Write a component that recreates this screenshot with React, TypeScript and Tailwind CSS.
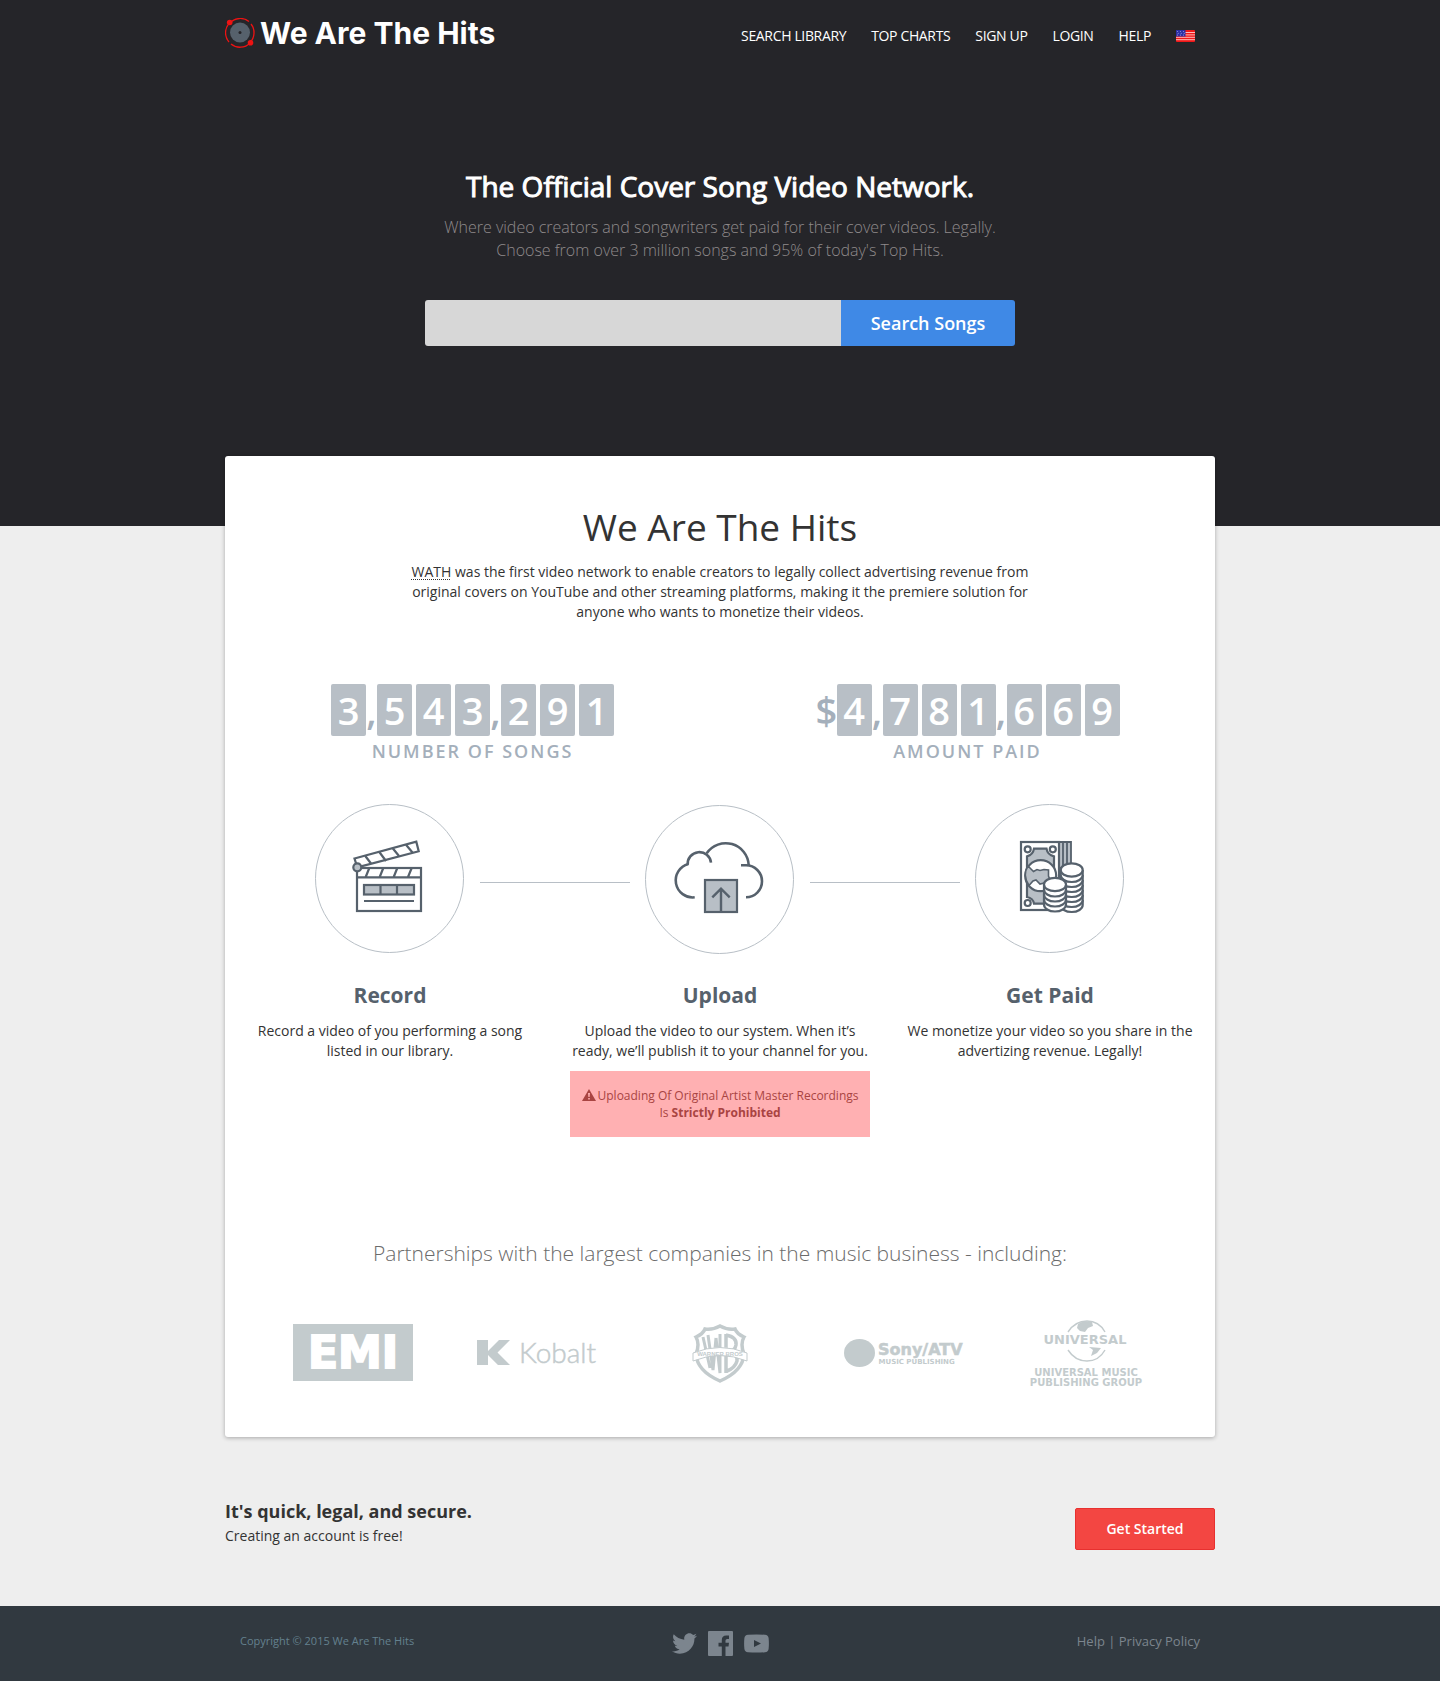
import React from "react";
import { FaTwitter } from "react-icons/fa";

const INK = "#56616c";
const TINT = "#b8bfc6";
const LOGO = "#c3cbcd";

function BrandMark() {
  return (
    <svg width="30" height="30" viewBox="0 0 30 30" aria-hidden="true">
      <circle cx="15" cy="14.500" r="10" fill="#56616c" />
      <circle cx="15" cy="14.500" r="1.500" fill="#252529" />
      <g fill="none" stroke="#ed1313" strokeWidth="1.300">
        <path d="M5 5A14 14 0 0 1 24 3.500" />
        <path d="M26 6A14 14 0 0 1 25 24.500" />
        <path d="M25 25A14 14 0 0 1 6 26" />
        <path d="M4 24A14 14 0 0 1 4.500 5" />
      </g>
      <circle cx="4.700" cy="4.500" r="2.800" fill="#ed1313" />
      <circle cx="25.500" cy="24.700" r="2.800" fill="#ed1313" />
    </svg>
  );
}

function Flag() {
  return (
    <svg width="19" height="12" viewBox="0 0 19 12" role="img" aria-label="United States">
      <rect width="19" height="12" rx="1" fill="#f01818" />
      <path d="M0 2.500H19M0 4.900H19M0 7.300H19M0 9.700H19" stroke="#fbb" strokeWidth="1" />
      <rect width="9.500" height="6.500" fill="#2b2fa5" />
      <g fill="#8f92dd">
        {[1.5, 4.5, 7.5].map((x) => (
          <g key={x}>
            <circle cx={x} cy="1.500" r="0.600" />
            <circle cx={x + 0.7} cy="3.300" r="0.600" />
            <circle cx={x} cy="5.100" r="0.600" />
          </g>
        ))}
      </g>
    </svg>
  );
}

function StepCircle({ label, cy, children }: { label: string; cy: number; children: React.ReactNode }) {
  return (
    <svg className="shrink-0" width="150" height="150" viewBox="0 0 150 150" role="img" aria-label={label}>
      <circle cx="74.500" cy={cy} r="74" fill="none" stroke={TINT} />
      <g fill="none" stroke={INK} strokeWidth="2.200">
        {children}
      </g>
    </svg>
  );
}

function Clapper() {
  return (
    <>
      <rect x="42" y="64" width="64" height="43" />
      <path d="M42 73.300H106M54.300 64L50.700 73M68.300 64L64.700 73M82.300 64L78.700 73M96.700 64L93 73" />
      <path d="M39.500 54.500L101.300 37.700L103.700 47.300L42.300 63.300Z" />
      <path d="M50.300 52L56 59.500M64.300 48L71 57M77.700 44.300L84 52M91 40.700L97.700 48.700" />
      <rect x="49" y="81" width="50" height="9.500" fill={TINT} />
      <path d="M65.500 81V90.500M82 81V90.500M49 97H99" />
      <circle cx="42.300" cy="63.300" r="4" fill={TINT} />
    </>
  );
}

function CloudUpload() {
  return (
    <>
      <g strokeWidth="2.600">
        <path d="M49.700 93.300A17 17 0 0 1 43.300 60" />
        <path d="M42.700 61A11.700 11.700 0 1 1 66 58.700" />
        <path d="M61.700 49.300A23 23 0 0 1 103.700 61.300" />
        <path d="M96 61.300H101A16 16 0 0 1 101 93.300" />
      </g>
      <rect x="60" y="76" width="32" height="32" fill={TINT} />
      <path d="M76 85V108M67.300 93.300L76 84.600L84.700 93.300" strokeWidth="2.400" />
    </>
  );
}

function CoinStack({ cx, top, coins, step }: { cx: number; top: number; coins: number; step: number }) {
  const rings = Array.from({ length: coins }, (_, i) => top + (coins - i) * step);
  return (
    <>
      {rings.map((y) => (
        <path key={y} d={`M${cx - 11} ${y - step}V${y}A11 7 0 0 0 ${cx + 11} ${y}V${y - step}`} fill="#fff" />
      ))}
      <ellipse cx={cx} cy={top} rx="11" ry="6.700" fill="#fff" />
    </>
  );
}

function Money() {
  return (
    <>
      <path d="M84 38H96V64H84ZM88 38V64M92 38V64" fill={TINT} strokeWidth="1.800" />
      <rect x="46" y="38" width="38" height="68" fill="#fff" />
      <path
        d="M59 44.700H71.500Q72.500 51 79 52.300V93Q72.500 94 71.500 99.700H59Q58 94 52 93V52.300Q58 51 59 44.700Z"
        fill={TINT}
      />
      <circle cx="52.700" cy="45.300" r="3" fill="#fff" />
      <circle cx="77.800" cy="45.300" r="3" fill="#fff" />
      <circle cx="52.700" cy="99" r="3" fill="#fff" />
      <circle cx="65.700" cy="71.700" r="15.500" fill="#fff" />
      <path
        d="M53 62L58.500 67.500L62 65.500L65 66.500L69 65.500L73.500 66V72L75 76L71 78.500L65 80L61 76L58 77L54 81.500Q47 71 53 62Z"
        fill={TINT}
        strokeWidth="1.600"
      />
      <CoinStack cx={96.700} top={66} coins={7} step={5} />
      <CoinStack cx={80} top={80.500} coins={4} step={5} />
    </>
  );
}

function EmiLogo() {
  return (
    <svg width="120" height="59" viewBox="0 0 120 59" role="img" aria-label="EMI">
      <rect width="120" height="57" fill={LOGO} />
      <text x="60" y="44" textAnchor="middle" fill="#fff" stroke="#fff" strokeWidth="2" className="font-['DejaVu_Sans'] text-[44px] font-bold">
        EMI
      </text>
    </svg>
  );
}

function KobaltLogo() {
  return (
    <svg className="overflow-visible" width="120" height="33" viewBox="0 0 120 33" role="img" aria-label="Kobalt">
      <path d="M0 3H11V14L22 3H33L20.500 15.500L33 28H21L11 18V28H0Z" fill={LOGO} />
      <text x="42" y="26" fill={LOGO} stroke={LOGO} strokeWidth="0.500" className="font-['Lato'] text-[28px] font-light">
        Kobalt
      </text>
    </svg>
  );
}

function WarnerLogo() {
  return (
    <svg width="120" height="60" viewBox="0 0 120 60" role="img" aria-label="Warner Bros.">
      <g fill="none" stroke={LOGO}>
        <path
          d="M60 2Q67 6 75 5Q77 10 84 13Q80 20 84 30Q83 47 60 57Q37 47 36 30Q40 20 36 13Q43 10 45 5Q53 6 60 2Z"
          strokeWidth="3.500"
        />
        <path d="M43 13L50 44M48 11L53 46L56 14M56 14L60 49V10" strokeWidth="3" />
        <path d="M66 10V49M66 11Q77 13 76 21Q75 27 68 28Q78 29 77 37Q75 44 67 47" strokeWidth="3.500" />
      </g>
      <path d="M33 29Q60 18 87 29V37Q60 26 33 37Z" fill="#fff" stroke={LOGO} />
      <text x="60" y="31.500" textAnchor="middle" fill={LOGO} className="font-['Liberation_Sans'] text-[6px] font-bold">
        WARNER BROS
      </text>
    </svg>
  );
}

function SonyLogo() {
  return (
    <svg width="120" height="31" viewBox="0 0 120 31" role="img" aria-label="Sony/ATV Music Publishing">
      <ellipse cx="15.500" cy="15" rx="15.500" ry="14" fill={LOGO} />
      <g fill={LOGO} className="font-['DejaVu_Sans'] font-bold">
        <text x="34" y="17" stroke={LOGO} strokeWidth="0.500" className="text-[16px]">
          Sony/ATV
        </text>
        <text x="34.500" y="25.500" className="text-[7px]">
          MUSIC PUBLISHING
        </text>
      </g>
    </svg>
  );
}

function UniversalLogo() {
  return (
    <svg width="120" height="67" viewBox="0 0 120 67" role="img" aria-label="Universal Music Publishing Group">
      <g fill="none" stroke={LOGO} strokeWidth="1.400">
        <path d="M41 12Q48 1 60 1Q72 1 78 12" />
        <path d="M41 30Q48 41 60 41Q72 41 78 30" />
      </g>
      <path d="M51 4Q56 0 65 2L66 6L61 8L58 12L53 11L50 8ZM62 27L74 28L70 33L64 36L66 30Z" fill={LOGO} />
      <g fill={LOGO} textAnchor="middle" className="font-['DejaVu_Sans'] font-bold">
        <text x="58" y="24" className="text-[13px]">
          UNIVERSAL
        </text>
        <text x="59" y="56" className="text-[10px]">
          UNIVERSAL MUSIC
        </text>
        <text x="59" y="66" className="text-[10px]">
          PUBLISHING GROUP
        </text>
      </g>
    </svg>
  );
}

function Counter({ value, prefix, label }: { value: string; prefix?: string; label: string }) {
  return (
    <div className="text-center text-[#a4afbb]">
      <div className="flex h-[52px] items-start justify-center text-[38px] leading-[52px] font-semibold">
        {prefix && <span className="w-[21px] text-left">{prefix}</span>}
        {value.split("").map((c, i) =>
          c === "," ? (
            <span key={i} className="-ml-1 w-[11px]">
              ,
            </span>
          ) : (
            <span key={i} className={`w-[35px] rounded-xs bg-[#b8bfc6] text-white ${i < value.length - 1 ? "mr-1" : ""}`}>
              {c}
            </span>
          )
        )}
      </div>
      <p className="mt-[3px] text-[18px] leading-[24px] font-semibold tracking-[2px] uppercase">{label}</p>
    </div>
  );
}

const nav = ["Search Library", "Top Charts", "Sign Up", "Login", "Help"];

function Connector() {
  return <div className="mt-1.5 h-px w-[150px] bg-[#b8bfc6]" />;
}

export default function App() {
  return (
    <div className="bg-[#eeeeee] font-['Open_Sans',sans-serif] text-[14px] leading-[20px] text-[#333333]">
      <div className="bg-[#252529] px-4 pb-[180px]">
        <header className="mx-auto flex max-w-[990px] items-start justify-between pt-[18px]">
          <a href="#" className="flex h-[30px] items-center gap-[5px] font-['Inter'] text-[30px] leading-[30px] font-bold text-white">
            <BrandMark />
            We Are The Hits
          </a>
          <nav className="mt-[8px] flex items-center gap-[25px] pr-5 text-white uppercase">
            {nav.map((n) => (
              <a key={n} href="#" className="tracking-tight">
                {n}
              </a>
            ))}
            <a href="#">
              <Flag />
            </a>
          </nav>
        </header>
        <section className="mx-auto max-w-[590px] pt-[118px] text-center">
          <h1 className="text-[28px] leading-[40px] text-white [-webkit-text-stroke:1px_white]">The Official Cover Song Video Network.</h1>
          <p className="mt-[10px] text-[16px] leading-[23px] font-light text-[#8f8a8b]">
            Where video creators and songwriters get paid for their cover videos. Legally.
            <br />
            Choose from over 3 million songs and 95% of today's Top Hits.
          </p>
          <form className="mt-[38px] flex h-[46px]" onSubmit={(e) => e.preventDefault()}>
            <input
              type="text"
              aria-label="Search songs"
              className="min-w-0 flex-1 rounded-l-[3px] bg-[#d7d7d7] px-4 text-[18px] outline-none"
            />
            <button type="submit" className="w-[174px] rounded-r-[3px] bg-[#3f89e6] text-[18px] font-semibold text-white">
              Search Songs
            </button>
          </form>
        </section>
      </div>

      <main className="mx-auto -mt-[70px] max-w-[990px] rounded-[3px] bg-white pt-[46px] pb-[50px] shadow-[0_1px_4px_rgba(0,0,0,0.3)]">
        <h2 className="text-center text-[37px] leading-[50px]">We Are The Hits</h2>
        <p className="mx-auto mt-[10px] max-w-[630px] text-center">
          <abbr title="We Are The Hits" className="underline decoration-dotted decoration-1 underline-offset-2">
            WATH
          </abbr>{" "}
          was the first video network to enable creators to legally collect advertising revenue from original covers on
          YouTube and other streaming platforms, making it the premiere solution for anyone who wants to monetize their
          videos.
        </p>

        <div className="mt-[62px] grid grid-cols-2">
          <Counter value="3,543,291" label="Number of songs" />
          <Counter value="4,781,669" prefix="$" label="Amount paid" />
        </div>

        <div className="mt-[41px] flex items-center justify-center gap-[15px]">
          <StepCircle label="Clapperboard" cy={74.5}>
            <Clapper />
          </StepCircle>
          <Connector />
          <StepCircle label="Cloud upload" cy={75.5}>
            <CloudUpload />
          </StepCircle>
          <Connector />
          <StepCircle label="Money" cy={74.5}>
            <Money />
          </StepCircle>
        </div>

        <div className="mt-[26px] grid grid-cols-3 text-center">
          <section className="px-[15px]">
            <h3 className="text-[21px] leading-[30px] font-bold text-[#56616c]">Record</h3>
            <p className="mt-[11px]">Record a video of you performing a song listed in our library.</p>
          </section>
          <section className="px-[15px]">
            <h3 className="text-[21px] leading-[30px] font-bold text-[#56616c]">Upload</h3>
            <p className="mt-[11px]">Upload the video to our system. When it’s ready, we’ll publish it to your channel for you.</p>
            <p className="mt-[10px] bg-[#ffb0b2] px-[10px] py-4 text-[12px] leading-[17px] text-[#a94442]">
              <svg className="mr-[2px] inline-block align-[-1px]" width="14" height="12" viewBox="0 0 14 12" aria-hidden="true">
                <path d="M7 0L14 12H0Z" fill="#a94442" />
                <path d="M6 4H8L7.600 8H6.400ZM6.200 9H7.800V10.600H6.200Z" fill="#ffb0b2" />
              </svg>
              Uploading Of Original Artist Master Recordings
              <br />
              Is <strong>Strictly Prohibited</strong>
            </p>
          </section>
          <section className="px-[15px]">
            <h3 className="text-[21px] leading-[30px] font-bold text-[#56616c]">Get Paid</h3>
            <p className="mt-[11px]">We monetize your video so you share in the advertizing revenue. Legally!</p>
          </section>
        </div>

        <h4 className="mt-[101px] text-center text-[21px] leading-[30px] font-light text-[#6b6b6b]">
          Partnerships with the largest companies in the music business - including:
        </h4>
        <div className="mt-[52px] flex items-center justify-between px-[68px]">
          <EmiLogo />
          <KobaltLogo />
          <WarnerLogo />
          <SonyLogo />
          <UniversalLogo />
        </div>
      </main>

      <section className="mx-auto mt-[62px] flex max-w-[990px] items-end justify-between">
        <div className="pb-1">
          <h5 className="text-[18px] leading-[24px] font-bold">It's quick, legal, and secure.</h5>
          <p className="mt-[3px]">Creating an account is free!</p>
        </div>
        <button
          type="button"
          className="h-[42px] w-[140px] rounded-[2px] border border-[#e8302f] bg-[#f34642] font-semibold text-white"
        >
          Get Started
        </button>
      </section>

      <footer className="mt-[56px] bg-[#313940] px-4 py-[25px] text-[#7c858e]">
        <div className="mx-auto grid max-w-[960px] grid-cols-3 items-start">
          <p className="text-[11px] text-[#64818f]">Copyright © 2015 We Are The Hits</p>
          <div className="flex items-center justify-center gap-[11px]">
            <a href="#" aria-label="Twitter">
              <FaTwitter size={25} />
            </a>
            <a href="#" aria-label="Facebook">
              <svg width="25" height="25" viewBox="0 0 25 25" fill="currentColor" aria-hidden="true">
                <path d="M1 0H24Q25 0 25 1V24Q25 25 24 25H17.500V15.500H20.500L21 11.800H17.500V9.500Q17.500 7.900 19.200 7.900H21V4.600Q20 4.400 18.300 4.400Q13.800 4.400 13.800 9V11.800H10.500V15.500H13.800V25H1Q0 25 0 24V1Q0 0 1 0Z" />
              </svg>
            </a>
            <a href="#" aria-label="YouTube">
              <svg width="25" height="25" viewBox="0 0 25 25" fill="currentColor" aria-hidden="true">
                <path
                  fillRule="evenodd"
                  d="M4 3.800Q12.500 3 21 3.800Q24.200 4 24.600 7Q25.200 12.500 24.600 18Q24.200 21 21 21.200Q12.500 22 4 21.200Q.8 21 .4 18Q-.2 12.500 .4 7Q.8 4 4 3.800ZM10 9V16L17 12.500Z"
                />
              </svg>
            </a>
          </div>
          <p className="text-right text-[13px]">
            <a href="#">Help</a> | <a href="#">Privacy Policy</a>
          </p>
        </div>
      </footer>
    </div>
  );
}
